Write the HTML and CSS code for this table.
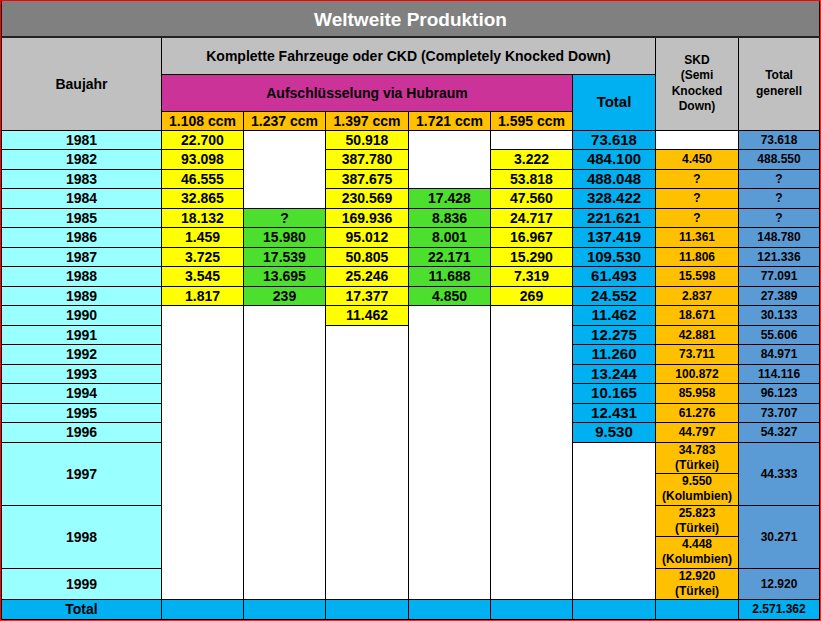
FILE: index.html
```html
<!DOCTYPE html>
<html lang="de">
<head>
<meta charset="utf-8">
<title>Weltweite Produktion</title>
<link rel="stylesheet" href="styles.css">
</head>
<body>
<div class="frame">
<table class="prod">
<colgroup>
<col class="c-year"><col class="c-n"><col class="c-n"><col class="c-n3"><col class="c-n"><col class="c-n"><col class="c-n3"><col class="c-n3"><col class="c-last">
</colgroup>
<tr class="r-title"><th colspan="9" class="title">Weltweite Produktion</th></tr>
<tr class="r-h1">
<th rowspan="3" class="gray">Baujahr</th>
<th colspan="6" class="gray">Komplette Fahrzeuge oder CKD (Completely Knocked Down)</th>
<th rowspan="3" class="gray small">SKD<br>(Semi<br>Knocked<br>Down)</th>
<th rowspan="3" class="gray small">Total<br>generell</th>
</tr>
<tr class="r-h2">
<th colspan="5" class="magenta">Aufschlüsselung via Hubraum</th>
<th rowspan="2" class="blue big">Total</th>
</tr>
<tr class="r-h3">
<th class="orange">1.108 ccm</th><th class="orange">1.237 ccm</th><th class="orange">1.397 ccm</th><th class="orange">1.721 ccm</th><th class="orange">1.595 ccm</th>
</tr>
<tr class="r-d">
<td class="year">1981</td><td class="y">22.700</td><td rowspan="4" class="w"></td><td class="y">50.918</td><td rowspan="3" class="w"></td><td class="w"></td><td class="blue big">73.618</td><td class="w"></td><td class="tg">73.618</td>
</tr>
<tr class="r-d">
<td class="year">1982</td><td class="y">93.098</td><td class="y">387.780</td><td class="y">3.222</td><td class="blue big">484.100</td><td class="skd">4.450</td><td class="tg">488.550</td>
</tr>
<tr class="r-d">
<td class="year">1983</td><td class="y">46.555</td><td class="y">387.675</td><td class="y">53.818</td><td class="blue big">488.048</td><td class="skd">?</td><td class="tg">?</td>
</tr>
<tr class="r-d">
<td class="year">1984</td><td class="y">32.865</td><td class="y">230.569</td><td class="g">17.428</td><td class="y">47.560</td><td class="blue big">328.422</td><td class="skd">?</td><td class="tg">?</td>
</tr>
<tr class="r-d">
<td class="year">1985</td><td class="y">18.132</td><td class="g">?</td><td class="y">169.936</td><td class="g">8.836</td><td class="y">24.717</td><td class="blue big">221.621</td><td class="skd">?</td><td class="tg">?</td>
</tr>
<tr class="r-d">
<td class="year">1986</td><td class="y">1.459</td><td class="g">15.980</td><td class="y">95.012</td><td class="g">8.001</td><td class="y">16.967</td><td class="blue big">137.419</td><td class="skd">11.361</td><td class="tg">148.780</td>
</tr>
<tr class="r-d">
<td class="year">1987</td><td class="y">3.725</td><td class="g">17.539</td><td class="y">50.805</td><td class="g">22.171</td><td class="y">15.290</td><td class="blue big">109.530</td><td class="skd">11.806</td><td class="tg">121.336</td>
</tr>
<tr class="r-d">
<td class="year">1988</td><td class="y">3.545</td><td class="g">13.695</td><td class="y">25.246</td><td class="g">11.688</td><td class="y">7.319</td><td class="blue big">61.493</td><td class="skd">15.598</td><td class="tg">77.091</td>
</tr>
<tr class="r-d">
<td class="year">1989</td><td class="y">1.817</td><td class="g">239</td><td class="y">17.377</td><td class="g">4.850</td><td class="y">269</td><td class="blue big">24.552</td><td class="skd">2.837</td><td class="tg">27.389</td>
</tr>
<tr class="r-d">
<td class="year">1990</td><td rowspan="12" class="w"></td><td rowspan="12" class="w"></td><td class="y">11.462</td><td rowspan="12" class="w"></td><td rowspan="12" class="w"></td><td class="blue big">11.462</td><td class="skd">18.671</td><td class="tg">30.133</td>
</tr>
<tr class="r-d">
<td class="year">1991</td><td rowspan="11" class="w"></td><td class="blue big">12.275</td><td class="skd">42.881</td><td class="tg">55.606</td>
</tr>
<tr class="r-d">
<td class="year">1992</td><td class="blue big">11.260</td><td class="skd">73.711</td><td class="tg">84.971</td>
</tr>
<tr class="r-d">
<td class="year">1993</td><td class="blue big">13.244</td><td class="skd">100.872</td><td class="tg">114.116</td>
</tr>
<tr class="r-d">
<td class="year">1994</td><td class="blue big">10.165</td><td class="skd">85.958</td><td class="tg">96.123</td>
</tr>
<tr class="r-d">
<td class="year">1995</td><td class="blue big">12.431</td><td class="skd">61.276</td><td class="tg">73.707</td>
</tr>
<tr class="r-d">
<td class="year">1996</td><td class="blue big">9.530</td><td class="skd">44.797</td><td class="tg">54.327</td>
</tr>
<tr class="r-sub">
<td rowspan="2" class="year">1997</td><td rowspan="5" class="w"></td><td class="skd two">34.783<br>(Türkei)</td><td rowspan="2" class="tg">44.333</td>
</tr>
<tr class="r-sub">
<td class="skd two">9.550<br>(Kolumbien)</td>
</tr>
<tr class="r-sub">
<td rowspan="2" class="year">1998</td><td class="skd two">25.823<br>(Türkei)</td><td rowspan="2" class="tg">30.271</td>
</tr>
<tr class="r-sub">
<td class="skd two">4.448<br>(Kolumbien)</td>
</tr>
<tr class="r-last">
<td class="year">1999</td><td class="skd two">12.920<br>(Türkei)</td><td class="tg">12.920</td>
</tr>
<tr class="r-total">
<td class="year tot">Total</td><td class="blue"></td><td class="blue"></td><td class="blue"></td><td class="blue"></td><td class="blue"></td><td class="blue"></td><td class="blue"></td><td class="blue small">2.571.362</td>
</tr>
</table>
</div>
</body>
</html>
```

FILE: styles.css
```css
html, body {
  margin: 0;
  padding: 0;
  background: #ffffff;
}

.frame {
  width: 818px;
  border-top: 1px solid #ff0000;
  border-left: 1px solid #ff0000;
  border-right: 2px solid #ff2020;
  border-bottom: 2px solid #ff2020;
}

.prod {
  width: 818px;
  table-layout: fixed;
  border-collapse: collapse;
  font-family: "Liberation Sans", Arial, sans-serif;
  font-weight: bold;
  font-size: 14px;
  color: #000;
}

.c-year { width: 160px; }
.c-n { width: 82px; }
.c-n3 { width: 83px; }
.c-last { width: 81px; }

.prod th,
.prod td {
  border: 1px solid #000;
  padding: 0;
  text-align: center;
  vertical-align: middle;
  line-height: 16px;
  font-weight: bold;
  overflow: hidden;
  white-space: nowrap;
}

.r-title { height: 36px; }
.r-h1 { height: 37px; }
.r-h2 { height: 37px; }
.r-h3 { height: 19px; }
.r-d { height: 19.5px; }
.r-sub { height: 31.5px; }
.r-last { height: 31px; }
.r-total { height: 20px; }

.title {
  background: #808080;
  color: #ffffff;
  font-size: 19px;
  padding-top: 3px !important;
  border-bottom: 2px solid #222 !important;
  border-top: none !important;
}

.gray { background: #c0c0c0; }
.small { font-size: 12px; line-height: 15.5px !important; }
.magenta { background: #cc3399; }
.orange { background: #ffc000; }
.blue { background: #00b0f0; }
.big { font-size: 15px; }
.y { background: #ffff00; }
.g { background: #4ddf2e; }
.w { background: #ffffff; }
.year { background: #99ffff; }
.skd { background: #ffc000; font-size: 12px; }
.tg { background: #5b9bd5; font-size: 12px; }
.two { line-height: 15px !important; }
.tot { background: #00b0f0; }
.r-total .small { line-height: 16px !important; }
```
